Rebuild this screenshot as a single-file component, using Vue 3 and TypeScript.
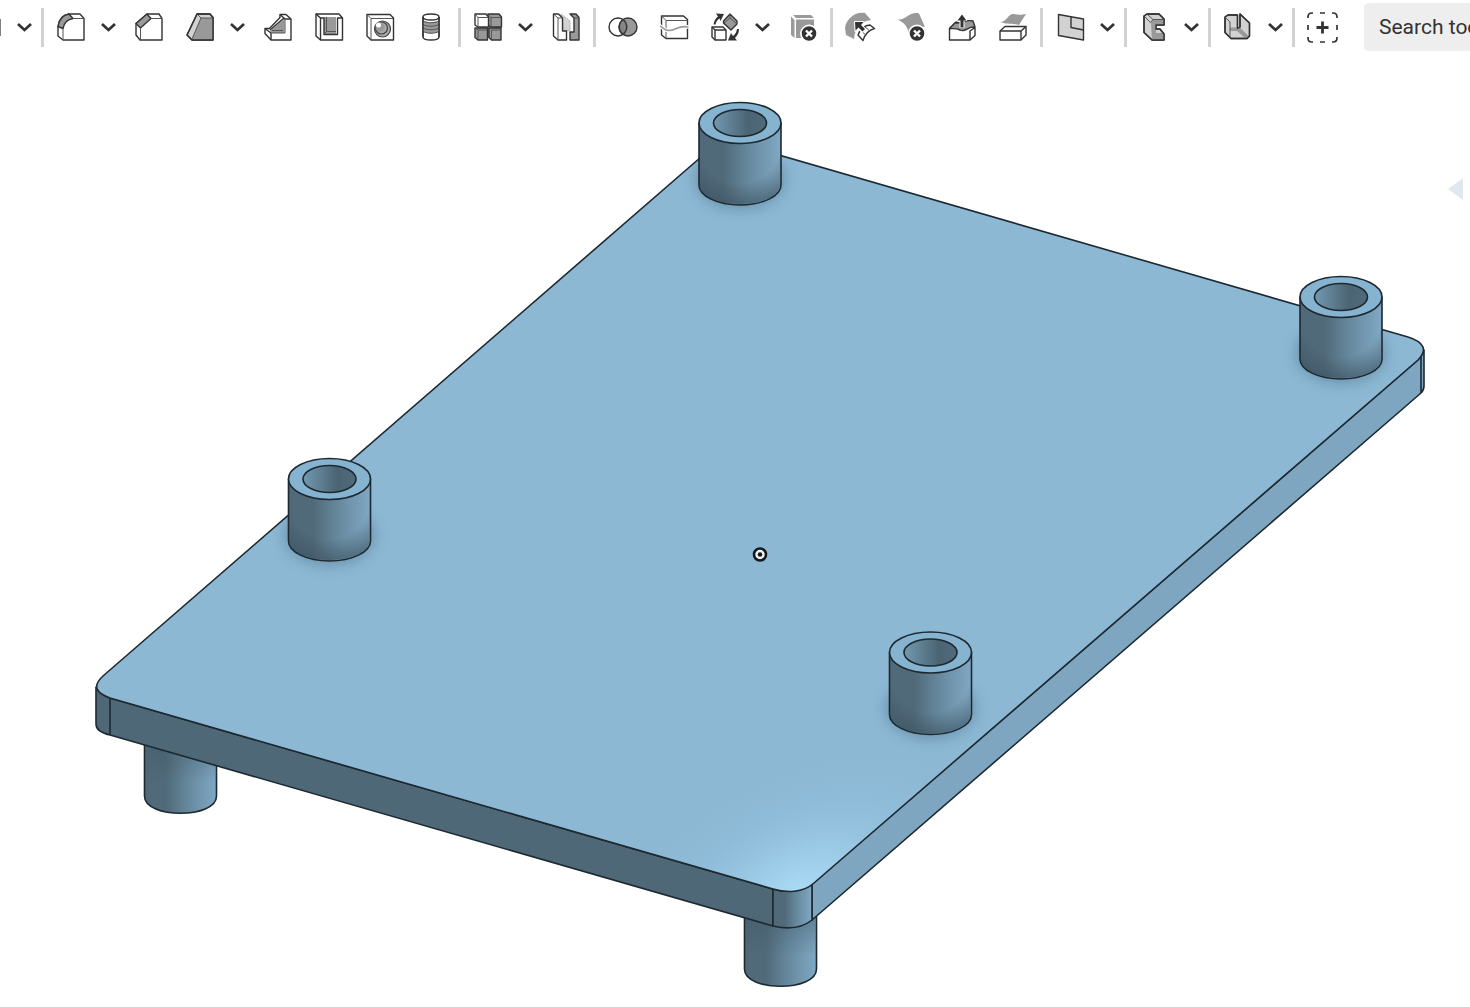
<script setup lang="ts">
type Shape = [style: string, d: string]
interface Tool { name: string; shapes: Shape[]; menu?: boolean }

const circle = (cx: number, cy: number, r: number): string =>
  `M${cx - r} ${cy}a${r} ${r} 0 1 0 ${2 * r} 0a${r} ${r} 0 1 0 ${-2 * r} 0z`

const badge: Shape[] = [
  ['halo', circle(20, 20.5, 8)],
  ['solid', circle(20, 20.5, 7.3)],
  ['cross', 'M17 17.5l6 6M23 17.5l-6 6'],
]

const groups: Tool[][] = [
  [
    { name: 'Fillet', menu: true, shapes: [
      ['white', 'M1 13.5C2 6 6 2 12 1H23L27 5.5V27H6L1 23z'],
      ['mid', 'M1 13.5C2 6 6 2 12 1L16 5.5C10 6.500 7 10 6 15.500z'],
      ['hair', 'M16 5.5H27M6 15V27'],
    ] },
    { name: 'Chamfer', shapes: [
      ['white', 'M1 10.5L12 1H24L27 5.500V27H5L1 22z'],
      ['mid', 'M1 10.5L12 1L16 5.5L5.500 15z'],
      ['hair', 'M16 5.5H27M5.5 15V27'],
    ] },
    { name: 'Draft', menu: true, shapes: [
      ['light', 'M1 22L11 1H24L27 4.5V27H6z'],
      ['grey', 'M6 26.5L15 5H27V26.500z'],
      ['hair', 'M6 26L15 5H27M11 1l4 4'],
      ['line', 'M1 22L11 1H24L27 4.5V27H6z'],
    ] },
    { name: 'Rib', shapes: [
      ['white', 'M16 1.5H22L27 6V27H7L1 20.5V15.5H5.5L16 4.5z'],
      ['grey', 'M6 18L20.500 5.500V20H8z'],
      ['line', 'M6 17L20 5M16 1.500L21 6H27M1 15.500L7 20V27'],
      ['hair', 'M21 6V20H7M8 17.500H19'],
    ] },
    { name: 'Shell', shapes: [
      ['white', 'M1 1H24L27.500 5V27H5.500L1 23z'],
      ['grey', 'M9 4H21V21H9z'],
      ['line', 'M1 1L5.500 5V27M5.500 5H9V21.500H22.500V5H27.500'],
      ['hair', 'M11.500 4V18.500H21M11.500 18.500L9 21'],
    ] },
    { name: 'Hole', shapes: [
      ['white', 'M1 1.5H24L27.500 5V27H5L1 23z'],
      ['hair', 'M1 1.5L5 5.500H27M5 5.500V27'],
      ['ring', circle(16.5, 16, 8)],
      ['ring', circle(15.5, 15, 6)],
      ['grey', circle(14, 14, 4.5)],
      ['shine', circle(12.500, 12, 2.5)],
    ] },
    { name: 'External thread', shapes: [
      ['white', 'M6 4C6 0 22 0 22 4V24C22 28 6 28 6 24z'],
      ['grey', 'M6 7C8 10 20 10 22 7V18C20 21 8 21 6 18z'],
      ['line', 'M6 4C6 8 22 8 22 4'],
      ['hair', 'M6 7.500C8 10.500 20 10.500 22 7.500M6 11C8 14 20 14 22 11M6 14.500C8 17.500 20 17.500 22 14.500M6 18C8 21 20 21 22 18'],
      ['line', 'M6 4V24M22 4V24'],
    ] },
  ],
  [
    { name: 'Linear pattern', menu: true, shapes: [
      ['mid', 'M1 15H13.500V27H4L1 24.500zM15 15H27V27H17.500L15 24.500z'],
      ['mid', 'M14 1H25L27.500 4V14H16.500L14 12z'],
      ['white', 'M1 1H12L14.500 4V14H4L1 12z'],
      ['hair', 'M1 1L4 4.500H14M4 4.500V13M14.500 2L17 4.500H27M17 4.500V13M4 17H13M4 17V26M17.500 17H27M17.500 17V26M1 15L4 17'],
    ] },
    { name: 'Split', shapes: [
      ['pale', 'M9 1L18 8V18L12 17z'],
      ['white', 'M1.500 1H6.500L10.500 5V18H14.500V27H6L1.500 23z'],
      ['hair', 'M1.500 1L6 5V27M6 5H10.500'],
      ['mid', 'M18 1H24L27 4.500V27H18V19H22V5z'],
      ['hair', 'M22 5H27'],
    ] },
  ],
  [
    { name: 'Boolean', shapes: [
      ['white', circle(9, 14, 9)],
      ['mid', circle(19, 14, 9)],
      ['dark', 'M14 6.500C19 11 19 17 14 21.500C9 17 9 11 14 6.500z'],
    ] },
    { name: 'Wrap', shapes: [
      ['white', 'M1.500 3H23.500L27.500 6.500V25.500H6L1.500 22z'],
      ['hair', 'M1.500 3L6 7.500H27.500M6 7.500V25.500'],
      ['gap', 'M-1 12.500C3 14 4 18 10 17.500C17 17 18 12 29 14'],
      ['wave', 'M0 13C3 14 4 18 10 17.500C17 17 18 12 28.500 14'],
    ] },
    { name: 'Transform', menu: true, shapes: [
      ['white', 'M1 14H12L15 17V27H4L1 24z'],
      ['line', 'M1 14L4 17H15M4 17V27'],
      ['mid', 'M19 1L26 8V11L20 17L12.500 10V8z'],
      ['hair', 'M19 1V5L26 11M19 5L13 10'],
      ['solid', 'M5 .5L13 1L9.500 8L8.500 5.500C6 7 5 9 4.500 11.500H2.500C3 8 4.500 5.500 7 3.500z'],
      ['solid', 'M26 16H28C28 20 26.500 22.500 24 25L26 27.500L17 27.500L20 20L22 23C24.500 21 25.500 19 26 16z'],
    ] },
    { name: 'Delete part', shapes: [
      ['grey', 'M4 2H22L25 5H7zM2 3.500L5.500 7V25L2 22zM7 6.500H25V25H7z'],
      ...badge,
    ] },
  ],
  [
    { name: 'Modify fillet', shapes: [
      ['grey', 'M-1 15C0 6 9-2 19 0L25 7C15 8 9 15 8 26L0 22z'],
      ['halo', 'M11 22C14 16 19 12 24 12L29 15.500C23 17 19 21 17 28z'],
      ['white', 'M12 22C14 16 19 12 24 12L28.500 15.500C23 17 19 21 17 27.500z'],
      ['hair', 'M15 18l5 4M19 14l5 4'],
      ['halo', 'M9 9H17L15 12L19 16L16 19L12.500 15L9.500 18z'],
      ['solid', 'M9 9H17.500L15 12L19 16L16.500 18.500L12.500 14.500L9.500 17.500z'],
    ] },
    { name: 'Delete face', shapes: [
      ['grey', 'M0 6.500C9 8 12-2 22 .5L28 14C24 12 18 20 12 24C12 14 7 9 0 6.500z'],
      ...badge,
    ] },
    { name: 'Move face', shapes: [
      ['white', 'M1.500 15.500L8 9L27 15V22.500L22 27H1.500z'],
      ['mid', 'M1.500 15.500L7 10C14 11 17 6 25 8L27 14C20 13 17 20 12 17C8 15 5 16 1.500 15.500z'],
      ['line', 'M22 27V18L27 14.500'],
      ['halo', 'M14 2L18 7H15.500V14H12.500V7H10z'],
      ['solid', 'M14 1.500L18.500 7.500H15.500V14.500H12.500V7.500H9.500z'],
    ] },
    { name: 'Replace face', shapes: [
      ['grey', 'M1.500 9C9 8 9 0 15 1C20 2 22 2 27 1L20 12C13 10 9 12 1.500 9z'],
      ['white', 'M1 18L6 13.500H27V22L22 27H1z'],
      ['line', 'M1 18H22V27M22 18L27 13.500'],
    ] },
  ],
  [
    { name: 'Surface', menu: true, shapes: [
      ['light', 'M2.500 1.500L27.500 6V27L2.500 22.500z'],
      ['line', 'M15 3.500V14.500L27.500 17'],
    ] },
  ],
  [
    { name: 'Frame', menu: true, shapes: [
      ['light', 'M4 3L7 1H19L24 6V12H16V16H20L24 21V27H12L4 19.500z'],
      ['grey', 'M11 10L13 6H24V12H16V20H24V27H12z'],
      ['hair', 'M4 3L10.500 9.500M7 1L13 6.500H23M10.500 9.500L13 6.500'],
      ['line', 'M4 3L7 1H19L24 6V12H16V16H20L24 21V27H12L4 19.500z'],
    ] },
  ],
  [
    { name: 'Sheet metal', menu: true, shapes: [
      ['light', 'M1 4L4 2H13.500V15.500L16 14V1L25.500 10V23L23 25.500H7L1 19.500z'],
      ['grey', 'M6 14.500H16L25 23.500L21 25L13 18H6z'],
      ['line', 'M1 4L4 2H13.500V15.500L16 14V1L25.500 10V23L23 25.500H7L1 19.500z'],
      ['hair', 'M1.500 4.500L6 9V25'],
    ] },
  ],
  [
    { name: 'Add custom feature', shapes: [
      ['bold', 'M0 5V4Q0 0 4 0H5M24 0H25Q29 0 29 4V5M29 24V25Q29 29 25 29H24M5 29H4Q0 29 0 25V24M12 0H17M12 29H17M0 12V17M29 12V17'],
      ['plus', 'M14.500 8.500V20.500M8.500 14.500H20.500'],
    ] },
  ],
]

const bosses = [
  { x: 740, y: 123 },
  { x: 1341, y: 297 },
  { x: 329.5, y: 479 },
  { x: 930.5, y: 652.5 },
]
const legs = [
  { x: 180.5, y: 796 },
  { x: 780.5, y: 969 },
]
const plateTop =
  'M103 676L716 144H741L1408 337C1424 342 1428 350 1418 360L814 883C803 893 786 893 773 889L110 698C96 693 92 686 103 676z'
</script>

<template>
  <div class="app">
    <header class="toolbar" role="toolbar" aria-label="Feature tools">
      <span class="cut-tool"></span>
      <button class="chevron" type="button" aria-label="More sketch tools">
        <svg width="16" height="10" viewBox="0 0 16 10"><path d="M1 2L7.500 8L14 2" /></svg>
      </button>
      <template v-for="(group, g) in groups" :key="g">
        <span class="separator"></span>
        <template v-for="tool in group" :key="tool.name">
          <button class="tool" type="button" :aria-label="tool.name">
            <svg width="29" height="29" viewBox="0 0 29 29">
              <path v-for="(shape, i) in tool.shapes" :key="i" :class="shape[0]" :d="shape[1]" />
            </svg>
          </button>
          <button v-if="tool.menu" class="chevron" type="button" :aria-label="`${tool.name} menu`">
            <svg width="16" height="10" viewBox="0 0 16 10"><path d="M1 2L7.500 8L14 2" /></svg>
          </button>
        </template>
      </template>
      <input class="search" type="text" placeholder="Search tools..." aria-label="Search tools" />
    </header>

    <main class="viewport">
      <svg class="scene" viewBox="0 54 1470 953" role="img" aria-label="Mounting plate with four standoffs">
        <defs>
          <linearGradient id="round">
            <stop offset="0" stop-color="#506a7a" />
            <stop offset=".3" stop-color="#506a79" />
            <stop offset=".6" stop-color="#66889d" />
            <stop offset="1" stop-color="#80a9c4" />
          </linearGradient>
          <linearGradient id="bore">
            <stop offset="0" stop-color="#7299b1" />
            <stop offset=".65" stop-color="#4b6473" />
            <stop offset="1" stop-color="#506b7b" />
          </linearGradient>
          <radialGradient id="foot" gradientUnits="userSpaceOnUse" cx="0" cy="0" r="1" gradientTransform="translate(0 20) scale(62 62)">
            <stop offset=".65" stop-color="#3b505f" stop-opacity="0" />
            <stop offset="1" stop-color="#3b505f" stop-opacity=".6" />
          </radialGradient>
          <linearGradient id="under" x2="0" y2="1">
            <stop offset=".2" stop-color="#425968" stop-opacity=".5" />
            <stop offset=".65" stop-color="#425968" stop-opacity="0" />
          </linearGradient>
          <radialGradient id="glow" gradientUnits="userSpaceOnUse" cx="0" cy="0" r="1" gradientTransform="translate(796 894) rotate(-28) scale(230 130)">
            <stop offset="0" stop-color="#acdcf6" />
            <stop offset=".3" stop-color="#a0d0ec" stop-opacity=".75" />
            <stop offset=".6" stop-color="#94c2de" stop-opacity=".4" />
            <stop offset="1" stop-color="#8cb8d4" stop-opacity="0" />
          </radialGradient>
          <filter id="soft" x="-40%" y="-40%" width="180%" height="180%"><feGaussianBlur stdDeviation="7" /></filter>
          <clipPath id="face"><path :d="plateTop" /></clipPath>
        </defs>

        <g v-for="leg in legs" :key="leg.x" class="edge" :transform="`translate(${leg.x} ${leg.y})`">
          <path fill="url(#round)" d="M-36 -70V0C-36 23 36 23 36 0V-70z" />
          <path fill="url(#under)" stroke="none" d="M-35 -70V0C-35 22 35 22 35 0V-70z" />
        </g>

        <g class="edge">
          <path fill="#4f6877" d="M96 687V724C96 729 101 733 110 735L773 926V889L110 698z" />
          <path fill="#7fa6c1" d="M812 884V920L1421 393Q1424 390 1424 386V350L1418 360z" />
          <path fill="url(#round)" d="M773 889V926C790 930 802 928 812 920V884C802 892 786 893 773 889z" />
          <path fill="none" d="M110 698V735M1421 357V393" />
        </g>
        <path fill="#8cb8d4" :d="plateTop" />
        <path fill="url(#glow)" :d="plateTop" />
        <g clip-path="url(#face)">
          <ellipse v-for="boss in bosses" :key="boss.x" :cx="boss.x" :cy="boss.y + 56" rx="45" ry="30" fill="#55788f" opacity=".6" filter="url(#soft)" />
        </g>
        <path class="edge" fill="none" :d="plateTop" />

        <g v-for="boss in bosses" :key="boss.x" class="edge" :transform="`translate(${boss.x} ${boss.y})`">
          <path fill="url(#round)" d="M-41 0V62A41 20 0 0 0 41 62V0z" />
          <path fill="url(#foot)" stroke="none" d="M-40 0V62A40 19 0 0 0 40 62V0z" />
          <ellipse rx="41" ry="20.5" fill="#86b3d0" />
          <ellipse rx="26.5" ry="13.5" fill="url(#bore)" />
        </g>

        <circle cx="760" cy="554.5" r="6" fill="#f4f4f4" stroke="#15191c" stroke-width="2.6" />
        <circle cx="760" cy="554.5" r="2.3" fill="#15191c" />
        <path fill="#e0e7ee" d="M1448 189L1463 178V200z" />
      </svg>
    </main>
  </div>
</template>

<style>
body {
  margin: 0;
  background: #fff;
}
</style>

<style scoped>
.app {
  min-height: 100vh;
  overflow: hidden;
  background: #fff;
  font-family: Roboto, "Liberation Sans", sans-serif;
}
.toolbar {
  display: flex;
  align-items: center;
  height: 54px;
  overflow: hidden;
}
.cut-tool {
  flex: none;
  width: 1px;
  height: 17px;
  margin-right: 12px;
  background: #808080;
}
.separator {
  flex: none;
  width: 3px;
  height: 39px;
  margin: 0 2px 0 1px;
  background: #d2d2d2;
}
button {
  display: flex;
  flex: none;
  align-items: center;
  justify-content: center;
  height: 40px;
  padding: 0;
  border: 0;
  background: none;
}
.tool {
  width: 51px;
}
.tool svg {
  overflow: visible;
}
.chevron {
  width: 23px;
  margin-right: 4px;
}
.chevron path {
  fill: none;
  stroke: #333;
  stroke-width: 2.7;
}
.tool path {
  fill: none;
  stroke: #333;
  stroke-width: 1.4;
  stroke-linejoin: round;
}
.tool .white { fill: #fff; }
.tool .mid { fill: #999; }
.tool .dark { fill: #858585; }
.tool .light { fill: #d2d2d2; }
.tool .pale { fill: #d2d2d2; stroke: #bbb; stroke-width: 1; }
.tool .ring { fill: #aaa; stroke: #444; stroke-width: 1.2; }
.tool .shine { fill: #fff; stroke: none; }
.tool .grey { fill: #999; stroke: none; }
.tool .hair { stroke: #555; stroke-width: 1; }
.tool .solid { fill: #333; stroke: none; }
.tool .halo { fill: #fff; stroke: #fff; stroke-width: 2; }
.tool .cross { stroke: #fff; stroke-width: 2.4; }
.tool .gap { stroke: #fff; stroke-width: 3.6; }
.tool .wave { stroke: #999; stroke-width: 1.6; }
.tool .bold { stroke-width: 1.7; }
.tool .plus { stroke-width: 2.8; }
.search {
  flex: none;
  box-sizing: border-box;
  width: 212px;
  height: 48px;
  margin-left: 16px;
  padding: 0 15px;
  border: 0;
  border-radius: 5px;
  background: #eee;
  color: #333;
  font: 21px Roboto, "Liberation Sans", sans-serif;
}
.search::placeholder {
  color: #333;
  opacity: 1;
}
.scene {
  display: block;
  width: 100%;
  height: auto;
}
.edge {
  stroke: #1d2930;
  stroke-width: 1.6;
  stroke-linejoin: round;
}
</style>
